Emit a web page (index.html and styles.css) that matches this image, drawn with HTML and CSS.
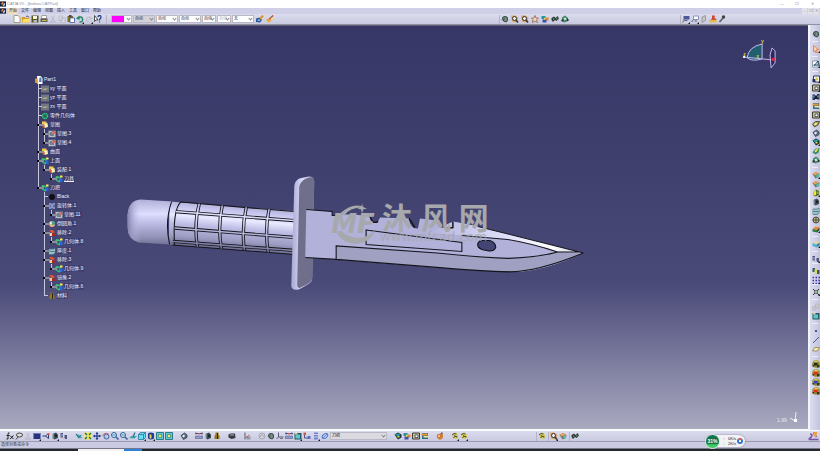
FILE: index.html
```html
<!DOCTYPE html>
<html lang="zh-CN">
<head>
<meta charset="utf-8">
<title>CATIA V5 - [bishou.CATPart]</title>
<link rel="stylesheet" href="styles.css">
</head>
<body>
<svg class="defs" aria-hidden="true">
  <symbol id="app" viewBox="0 0 16 16"><path fill="#16233f" d="M0 1h16v14H0z"/><path fill="#e98a38" d="M2 8l5-6 3 3-4 5z"/><path fill="#d8e6ff" d="M7 12l5-7 2 2-3 6z"/></symbol>
  <symbol id="new" viewBox="0 0 16 16"><path fill="#fff" stroke="#8a8860" stroke-width="1.5" d="M2 1h8l4 4v10H2z"/><path fill="#ddd6a0" d="M10 1v4h4z"/></symbol>
  <symbol id="open" viewBox="0 0 16 16"><path fill="#d59b22" d="M0 4h6l1 2h7v9H0z"/><path fill="#ffe06a" d="M3 8h13l-3 7H0z"/><path fill="none" stroke="#334" stroke-width="1.5" d="M8 3q4-3 6 2"/></symbol>
  <symbol id="save" viewBox="0 0 16 16"><path fill="#55551c" d="M1 1h14v14H1z"/><path fill="#f4f4df" d="M4 2h8v6H4z"/><path fill="#bbb" d="M5 10h7v5H5z"/></symbol>
  <symbol id="print" viewBox="0 0 16 16"><path fill="#fff" stroke="#555" d="M4 1h9v6H3z"/><path fill="#5d5d58" d="M1 7h14v7H1z"/><path fill="#d5c43c" d="M4 10h9v2H4z"/></symbol>
  <symbol id="cut" viewBox="0 0 16 16"><path fill="none" stroke="#b5b5c4" stroke-width="1.5" d="M4 1l6 10M11 1L6 11M3 12h3v3H3zM9 12h3v3H9z"/></symbol>
  <symbol id="copy" viewBox="0 0 16 16"><path fill="#dedee8" stroke="#b4b4c2" stroke-width="1.5" d="M2 2h7v9H2zM6 6h8v9H6z"/></symbol>
  <symbol id="paste" viewBox="0 0 16 16"><path fill="#81702d" d="M1 2h11v12H1z"/><path fill="#444" d="M4 0h5v4H4z"/><path fill="#fff" stroke="#32529c" stroke-width="1.5" d="M6 6h9v9H6z"/></symbol>
  <symbol id="undo" viewBox="0 0 16 16"><path fill="none" stroke="#238664" stroke-width="3" d="M4 6q8-5 9 2t-6 6"/><path fill="#238664" d="M0 7l7-6v9z"/></symbol>
  <symbol id="redo" viewBox="0 0 16 16"><path fill="none" stroke="#bdbdca" stroke-width="2" d="M12 6Q4 1 3 8t6 6"/><path fill="#bdbdca" d="M16 7L9 2v8z"/></symbol>
  <symbol id="help" viewBox="0 0 16 16"><path fill="#fff" stroke="#222" stroke-width="1.5" d="M1 1l7 9-4 0-3 3z"/><path fill="none" stroke="#24408c" stroke-width="2.5" d="M8 4q0-3 3-3t3 3-3 5v2M11 13v2"/></symbol>
  <symbol id="brush" viewBox="0 0 16 16"><path fill="#27559b" d="M0 7l8-2 4 5-4 5-8-1z"/><path fill="none" stroke="#d99722" stroke-width="4" d="M8 8l6-7"/><path fill="#76c1e8" d="M3 9h5v3H3z"/></symbol>
  <symbol id="wand" viewBox="0 0 16 16"><path fill="#e9a33c" d="M0 10l6-4 5 5-6 4z"/><path fill="none" stroke="#b0442e" stroke-width="2.5" d="M7 8l7-7"/><path fill="#f4de60" d="M10 5l6 2-5 4z"/></symbol>
  <symbol id="gear" viewBox="0 0 16 16"><circle cx="8" cy="8" r="6" fill="#7a8a84"/><path fill="none" stroke="#324843" stroke-width="2" d="M2 9q2-7 7-6t4 7-6 3 0-6"/></symbol>
  <symbol id="find" viewBox="0 0 16 16"><path fill="#d9a45d" d="M0 1h9l6 5-4 9-9-2z"/><circle cx="7" cy="7" r="4" fill="#eee" stroke="#333" stroke-width="2"/><path stroke="#333" stroke-width="3" d="M10 10l4 5"/></symbol>
  <symbol id="star" viewBox="0 0 16 16"><path fill="#f1dab5" stroke="#8b5b4d" stroke-width="1.5" d="M8 1l2 5 5 0-4 4 2 5-5-3-5 3 1-6-3-3h5z"/></symbol>
  <symbol id="multi" viewBox="0 0 16 16"><path fill="#2a92a8" d="M1 2h8v6H1z"/><path fill="#e08a30" d="M7 5h8v6H7z"/><path fill="#3e52a6" d="M3 9h8v6H3z"/><path fill="#efe55b" d="M6 6h3v3H6z"/></symbol>
  <symbol id="chain" viewBox="0 0 16 16"><path fill="#2d3f39" d="M1 6l5-3 3 3 4-4 3 5-5 5-3-2-4 4-3-4z"/><path fill="#a3c4b2" d="M4 7l3 1-2 2zM11 5l2 2-2 2z"/></symbol>
  <symbol id="eco" viewBox="0 0 16 16"><path fill="#3e8264" d="M2 5l6-4 6 5v6l-7 3-5-4z"/><path fill="#cfe6d6" d="M5 6l4-1 2 4-4 2z"/><path fill="#202e2a" d="M1 9h4v4H1zM12 8h3v4h-3z"/></symbol>
  <symbol id="flag" viewBox="0 0 16 16"><path fill="#4b56a0" d="M4 2h11v7H4z"/><path fill="none" stroke="#58606c" stroke-width="2" d="M4 2v9l-3 4M5 11h6"/></symbol>
  <symbol id="note" viewBox="0 0 16 16"><path fill="#fff" stroke="#6c79af" stroke-width="1.5" d="M5 2h10v7H5z"/><path fill="none" stroke="#58606c" stroke-width="2" d="M5 9l-4 5M7 12h5"/></symbol>
  <symbol id="plate" viewBox="0 0 16 16"><path fill="#c3c6bd" stroke="#8a8c88" stroke-width="1.5" d="M4 4l7-3v10l-7 4z"/></symbol>
  <symbol id="stamp" viewBox="0 0 16 16"><path fill="#d14732" d="M6 1h6l-1 6h3l1 3H3l3-3z"/><path fill="#e3bd4a" d="M0 10h15v5H1z"/></symbol>
  <symbol id="pin" viewBox="0 0 16 16"><path fill="none" stroke="#555d58" stroke-width="3" d="M3 14l7-8"/><circle cx="11" cy="4" r="3.5" fill="#3e4843"/></symbol>
  <symbol id="arrow" viewBox="0 0 16 16"><path fill="#fdd4b8" stroke="#e8864d" stroke-width="2" d="M3 1l10 8-5 1 3 5-3 1-2-5-3 3z"/></symbol>
  <symbol id="sketch" viewBox="0 0 16 16"><path fill="#fff" stroke="#6d8590" stroke-width="1.5" d="M1 2h11v12H1z"/><path fill="none" stroke="#214b56" stroke-width="2" d="M4 12l8-10 3 11M3 10h10"/></symbol>
  <symbol id="pad" viewBox="0 0 16 16"><path fill="#fff" stroke="#333a6c" stroke-width="2" d="M3 2h12v12H3z"/><path fill="#292d54" d="M1 8h6v6H1z"/><path fill="#dbc939" d="M7 5h5v6H7z"/></symbol>
  <symbol id="pocket" viewBox="0 0 16 16"><path fill="#c4c290" stroke="#403e32" stroke-width="2" d="M1 2h14v12H1z"/><path fill="#fff" stroke="#2e316a" stroke-width="1.500" d="M6 6h6v5H6z"/></symbol>
  <symbol id="shaft" viewBox="0 0 16 16"><path fill="#253b62" d="M1 3h5v11H1zM10 2h5v11h-5z"/><path fill="#15191d" d="M5 5h6v7H5z"/><path fill="#8cc8de" d="M3 5h2v4H3zM11 5h2v4h-2z"/></symbol>
  <symbol id="groove" viewBox="0 0 16 16"><path fill="#2c6e87" d="M2 2h12v12H2z"/><path fill="#ee9934" d="M1 3h12v4H1z"/><path fill="#f6e4a3" d="M5 8h10v3H5z"/></symbol>
  <symbol id="rib" viewBox="0 0 16 16"><path fill="#a5a252" stroke="#34372c" stroke-width="1.5" d="M1 8l6-5h8l-3 7-7 4z"/><path fill="#f6e98b" d="M6 6h5l-3 4H4z"/></symbol>
  <symbol id="slot" viewBox="0 0 16 16"><path fill="#5b7284" stroke="#253244" stroke-width="1.5" d="M2 7l7-5 5 4v5l-7 4z"/><path fill="#e9eee6" d="M4 8l4-3 2 3-3 3z"/></symbol>
  <symbol id="solid" viewBox="0 0 16 16"><path fill="#1c3038" d="M1 5l7-4 7 4v6l-7 4z"/><path fill="#25a1ad" d="M2 5l7-2 4 3-6 3z"/><path fill="#e8da2c" d="M7 8h4v3H7z"/></symbol>
  <symbol id="loft" viewBox="0 0 16 16"><path fill="#2e8e62" d="M1 11l5-7 9-2-2 9-6 4z"/><path fill="#f1dc48" d="M6 6l7-4-3 7-5 2z"/></symbol>
  <symbol id="fillet" viewBox="0 0 16 16"><path fill="#6d7773" d="M1 6l7-4 7 4-1 6-7 3z"/><path fill="#efa151" d="M1 5l7-3 5 3-7 4z"/><path fill="#4ec5b0" d="M9 8l5-2v5l-5 3z"/></symbol>
  <symbol id="draft" viewBox="0 0 16 16"><path fill="#56691f" d="M3 6l5-5 6 3v8l-7 3-4-2z"/><path fill="#f4e42f" d="M3 6l5-4v11l-5-1z"/><path fill="#88ae4b" d="M9 5h4v5H9z"/></symbol>
  <symbol id="shell" viewBox="0 0 16 16"><path fill="#3c4e58" d="M3 4l7-3 4 4v7l-7 3-4-3z"/><path fill="#a5b2b4" d="M2 4h3v9H2z"/><path fill="#1c242a" d="M8 5h4v5H8z"/></symbol>
  <symbol id="thick" viewBox="0 0 16 16"><path fill="#dcebe8" stroke="#3a7383" stroke-width="1.5" d="M2 4h9l3-2v10l-4 3H2z"/><path fill="none" stroke="#3a7383" stroke-width="1.5" d="M6 4v11M2 9h12M10 4v11"/></symbol>
  <symbol id="thread" viewBox="0 0 16 16"><circle cx="8" cy="8" r="6" fill="#cbbf7e" stroke="#4a4a43" stroke-width="2"/><path stroke="#4a4a43" stroke-width="2" d="M1 8h14M8 2v12"/></symbol>
  <symbol id="block" viewBox="0 0 16 16"><path fill="#ef842c" d="M1 8l6-5 8 2-5 5z"/><path fill="#317d40" d="M1 8l9 2v5l-9-2z"/><path fill="#214e4b" d="M10 10l5-5v5l-5 5z"/></symbol>
  <symbol id="cube" viewBox="0 0 16 16"><path fill="#e6d89b" d="M1 6l7-4 7 3-6 4z"/><path fill="#4cb9cf" d="M1 6l8 3v6l-8-3z"/><path fill="#338ca5" d="M9 9l6-4v6l-6 4z"/></symbol>
  <symbol id="mirror" viewBox="0 0 16 16"><path fill="#4f557e" d="M1 2h5v9H1zM9 6h5v8H9z"/><path fill="#b9bedf" d="M3 4h2v5H3zM6 12h4v2H6z"/></symbol>
  <symbol id="pair" viewBox="0 0 16 16"><path fill="#345c73" d="M1 2h5v8H1zM10 6h5v8h-5z"/><path fill="#e4d950" d="M5 5h5v8H5z"/></symbol>
  <symbol id="grid" viewBox="0 0 16 16"><path fill="none" stroke="#3131ad" stroke-width="3" stroke-dasharray="3 3" d="M1 3h15M1 9h15M1 15h15"/></symbol>
  <symbol id="scale" viewBox="0 0 16 16"><path stroke="#333" stroke-width="2" d="M2 2l12 12M14 2L2 14"/><path fill="#8ec28d" stroke="#333" d="M5 5h6v6H5z"/></symbol>
  <symbol id="ghost" viewBox="0 0 16 16"><path fill="#c9c9d1" stroke="#b5b5c0" stroke-width="1.5" d="M1 7h7v7H1zM7 2h7v8H7z"/></symbol>
  <symbol id="box" viewBox="0 0 16 16"><path fill="#25595f" d="M1 2h14v13H1z"/><path fill="#5ac6cf" d="M3 5h9v8H3z"/><path fill="#e2cd78" d="M2 2h5v3H2z"/></symbol>
  <symbol id="point" viewBox="0 0 16 16"><path fill="#3a5e9a" d="M6 6h4v4H6z"/></symbol>
  <symbol id="line" viewBox="0 0 16 16"><path stroke="#3d5a94" stroke-width="2" d="M2 14L14 2"/></symbol>
  <symbol id="plane" viewBox="0 0 16 16"><path fill="#f5e6a0" stroke="#827e5d" stroke-width="1.5" d="M1 12l4-7h10l-4 7z"/></symbol>
  <symbol id="ball" viewBox="0 0 16 16"><circle cx="8" cy="8" r="7.5" fill="#8d8934"/><path fill="#dfd351" d="M2 5l5-4 6 2-4 4z"/><path d="M4 5h7v6H4z"/><path fill="#283820" d="M10 10h5v5h-5zM1 10h3v3H1z"/></symbol>
  <symbol id="fx" viewBox="0 0 16 16"><path fill="none" stroke="#222" stroke-width="2" d="M7 2Q4 0 4 5v9H1M1 7h6M8 7l7 7M15 7l-7 7"/></symbol>
  <symbol id="chat" viewBox="0 0 16 16"><ellipse cx="9" cy="6" rx="6" ry="4" fill="#ddd" stroke="#444" stroke-width="2"/><path stroke="#444" stroke-width="2" d="M2 15l4-5"/></symbol>
  <symbol id="panel" viewBox="0 0 16 16"><path fill="#27337f" d="M1 2h14v12H1z"/><path fill="#6775b7" d="M1 2h14v2H1z"/></symbol>
  <symbol id="nodes" viewBox="0 0 16 16"><path fill="none" stroke="#333b67" stroke-width="2" d="M2 8h5l6-5v10L7 8"/><path fill="#5b8ccc" d="M1 6h4v4H1z"/><path fill="#d85a4c" d="M11 2h4v4h-4z"/></symbol>
  <symbol id="fly" viewBox="0 0 16 16"><path fill="#4ba9ba" d="M1 3l8 3 6 6-8 1z"/><path fill="none" stroke="#186a75" stroke-width="2" d="M2 4l5 7 6-5"/></symbol>
  <symbol id="fit" viewBox="0 0 16 16"><path fill="#efe65a" d="M1 1h14v14H1z"/><path fill="none" stroke="#226958" stroke-width="2.5" d="M2 2l4 4M14 2l-4 4M2 14l4-4M14 14l-4-4"/></symbol>
  <symbol id="pan" viewBox="0 0 16 16"><path fill="none" stroke="#26408d" stroke-width="2.5" d="M8 1v14M1 8h14"/><path fill="#26408d" d="M8 0l3 4H5zM8 16l3-4H5zM0 8l4-3v6zM16 8l-4-3v6z"/></symbol>
  <symbol id="rotate" viewBox="0 0 16 16"><circle cx="9" cy="9" r="5" fill="#b2cce5" stroke="#465c9b" stroke-width="2"/><path fill="none" stroke="#cc604c" stroke-width="2" d="M1 8q3-8 12-4"/></symbol>
  <symbol id="zoom" viewBox="0 0 16 16"><circle cx="6" cy="6" r="5" fill="#c9f0f2" stroke="#315e9a" stroke-width="2"/><path stroke="#315e9a" stroke-width="3" d="M10 10l5 5"/><path stroke="#315e9a" stroke-width="1.5" d="M3 6h6"/></symbol>
  <symbol id="normal" viewBox="0 0 16 16"><path fill="#3ba7b5" d="M0 12l5-4h11l-5 5z"/><path fill="none" stroke="#357080" stroke-width="2.5" d="M8 10l4-9"/></symbol>
  <symbol id="iso" viewBox="0 0 16 16"><path fill="#65dded" stroke="#246e9b" stroke-width="1.5" d="M1 5l4-4h10v10l-4 4H1z"/><path fill="none" stroke="#246e9b" stroke-width="1.5" d="M1 5h10v10M11 5l4-4"/></symbol>
  <symbol id="cyl" viewBox="0 0 16 16"><path fill="#203d91" d="M2 3q6-4 12 0v10q-6 4-12 0z"/><path fill="#e8cf4a" d="M5 5h4v8H5z"/></symbol>
  <symbol id="view" viewBox="0 0 16 16"><path fill="#61cad0" stroke="#287c8d" stroke-width="2" d="M1 1h14v14H1z"/><path fill="#e3e86e" stroke="#35635b" d="M5 5h6v6H5z"/></symbol>
  <symbol id="measure" viewBox="0 0 16 16"><path fill="none" stroke="#4a4c75" stroke-width="2" d="M1 3h14M2 1v4M14 1v4"/><path fill="#8d9cd1" stroke="#4a4c75" d="M1 8h14v5H1z"/><path fill="#d55" d="M6 2h4v3H6z"/></symbol>
  <symbol id="weight" viewBox="0 0 16 16"><path fill="#967520" d="M5 1h6v4l2 3v6H3V8l2-3z"/><path fill="#302811" d="M8 2h2v12H8z"/></symbol>
  <symbol id="camera" viewBox="0 0 16 16"><path fill="#343943" d="M1 5l4-2h9l1 9-8 2-6-3z"/><path fill="#aeb4c0" d="M4 5h8v2H4z"/></symbol>
  <symbol id="axis" viewBox="0 0 16 16"><path fill="none" stroke="#545b7a" stroke-width="2" d="M5 1v9h10M5 10l-4 4"/><path fill="#777" d="M8 12h6v2H8z"/></symbol>
  <symbol id="bars" viewBox="0 0 16 16"><path fill="#929ca8" d="M2 1h4v14H2zM7 9h8v6H7z"/><path stroke="#b6574a" stroke-width="2" d="M5 12l8-6"/></symbol>
  <symbol id="ring" viewBox="0 0 16 16"><ellipse cx="8" cy="8" rx="6" ry="4" fill="#c5d8ff" stroke="#4b74cb" stroke-width="2" transform="rotate(-35 8 8)"/><path fill="none" stroke="#4b74cb" stroke-width="1.5" d="M2 13L14 3"/></symbol>
  <symbol id="faint" viewBox="0 0 16 16"><circle cx="8" cy="8" r="6" fill="#d4d4dc" stroke="#a4a5b5" stroke-width="2"/><path fill="none" stroke="#a4a5b5" stroke-width="2" d="M4 10l4-5 4 5"/></symbol>
  <symbol id="stack" viewBox="0 0 16 16"><path fill="#6d83cf" d="M4 1h8v3H4zM4 6h8v3H4zM4 11h8v4H4z"/></symbol>
  <symbol id="tree" viewBox="0 0 16 16"><path fill="none" stroke="#4f5284" stroke-width="2" d="M3 3v9h9"/><path fill="#d05b4b" d="M1 1h5v5H1z"/><path fill="#5c6fc1" d="M9 8h6v6H9z"/></symbol>
  <symbol id="apple" viewBox="0 0 16 16"><path fill="#cf7a2d" d="M2 5q6-3 12 0 1 7-4 10H6Q0 11 2 5z"/><path fill="#68442a" d="M8 5l4-5 2 3z"/><path fill="#f2bd7d" d="M4 6h4v4H4z"/></symbol>
  <symbol id="spiral" viewBox="0 0 16 16"><path fill="#d9cf59" d="M2 3l8-2 5 6-3 7-8-1z"/><path fill="none" stroke="#444a45" stroke-width="2" d="M2 6q4-5 9-2M5 12q2-6 8-2M6 7l5 3"/></symbol>
  <symbol id="body" viewBox="0 0 16 16"><path fill="#3ac477" d="M3 2l5 1 4 3-2 3 3 4-5 2-6-4-2-5z"/><path fill="#1b5f54" d="M5 6h4v5H5z"/><path fill="#2c65dd" d="M10 7h5v7h-5z"/><path fill="#f5ef55" d="M10 1h5v4h-5z"/></symbol>
  <symbol id="geo" viewBox="0 0 16 16"><circle cx="8" cy="8" r="5" fill="#1d6855" stroke="#39be75" stroke-width="3" stroke-dasharray="3 1"/></symbol>
  <symbol id="set" viewBox="0 0 16 16"><path fill="#f5c94b" d="M2 1h9v6H2z"/><path fill="#fff1b0" d="M6 6l7-2 1 8-7 2z"/><path fill="#e4572a" d="M3 8h4v5H3z"/></symbol>
  <symbol id="sk" viewBox="0 0 16 16"><path fill="#777d91" d="M0 1h16v14H0z"/><path fill="none" stroke="#d2d7e4" stroke-width="1.5" d="M3 3v10h10V8L7 3z"/><path fill="#e36c45" d="M9 3h5v5H9z"/></symbol>
  <symbol id="pl" viewBox="0 0 16 16"><path fill="#72767f" d="M0 1h16v14H0z"/><path fill="#b5ae88" d="M2 10l4-3h8l-4 3z"/></symbol>
  <symbol id="part" viewBox="0 0 16 16"><path fill="#fff" d="M4 0h7l4 4v12H5z"/><path fill="#d79c34" d="M0 5h5v9H0z"/><path fill="#4a7fb8" d="M9 3h4v9H8z"/></symbol>
  <symbol id="black" viewBox="0 0 16 16"><circle cx="8" cy="8" r="6" fill="#101014"/></symbol>
  <symbol id="rev" viewBox="0 0 16 16"><path fill="none" stroke="#8fa9ef" stroke-width="3" stroke-dasharray="5 2" d="M4 2v12M12 2v12"/><path fill="#e7e7f8" d="M7 3h2v10H7z"/></symbol>
  <symbol id="edge" viewBox="0 0 16 16"><circle cx="8" cy="8" r="6" fill="#efb27d"/><path fill="#3da48c" d="M8 2q7 1 6 7l-6 1z"/><path fill="#fff" d="M3 5h4v3H3z"/></symbol>
  <symbol id="rem" viewBox="0 0 16 16"><path fill="#e4532f" d="M2 2h7l5 4-6 3z"/><path fill="#f2d1a8" d="M3 8h5v6H3z"/><path fill="#a5281f" d="M8 9h6v5H8z"/></symbol>
</svg>

<header class="titlebar"><svg class="logo"><use href="#app"/></svg><h1>CATIA V5 - [bishou.CATPart]</h1><span class="win"><button aria-label="最小化">—</button><button aria-label="还原">❐</button><button aria-label="关闭">✕</button></span></header>
<nav class="menubar"><svg class="logo"><use href="#app"/></svg><a class="current" href="#">开始</a><a href="#">文件</a><a href="#">编辑</a><a href="#">视图</a><a href="#">插入</a><a href="#">工具</a><a href="#">窗口</a><a href="#">帮助</a><span class="win doc"><button aria-label="最小化文档">–</button><button aria-label="还原文档">❐</button><button aria-label="关闭文档">✕</button></span></nav>

<div class="toolbar top" role="toolbar" aria-label="标准">
  <div class="group">
    <button aria-label="新建"><svg><use href="#new"/></svg></button><button aria-label="打开"><svg><use href="#open"/></svg></button><button aria-label="保存"><svg><use href="#save"/></svg></button><button aria-label="打印"><svg><use href="#print"/></svg></button><button aria-label="剪切"><svg><use href="#cut"/></svg></button><button aria-label="复制"><svg><use href="#copy"/></svg></button><button aria-label="粘贴"><svg><use href="#paste"/></svg></button><button class="more" aria-label="撤销"><svg><use href="#undo"/></svg></button><button class="more" aria-label="重做"><svg><use href="#redo"/></svg></button><button aria-label="帮助"><svg><use href="#help"/></svg></button>
  </div>
  <div class="group combos">
    <label class="combo color"><select aria-label="颜色"><option></option></select></label>
    <label class="combo wide off"><select aria-label="透明度"><option>自动</option></select></label>
    <label class="combo wide"><select aria-label="线宽"><option>自动</option></select></label>
    <label class="combo wide"><select aria-label="线型"><option>自动</option></select></label>
    <label class="combo"><select aria-label="点型"><option>自动</option></select></label>
    <label class="combo dim"><select aria-label="渲染"><option>自动</option></select></label>
    <label class="combo wide"><select aria-label="图层"><option>无</option></select></label>
    <button aria-label="格式刷"><svg><use href="#brush"/></svg></button><button aria-label="向导"><svg><use href="#wand"/></svg></button>
  </div>
  <div class="group tools">
    <button aria-label="设置"><svg><use href="#gear"/></svg></button><button aria-label="查找"><svg><use href="#find"/></svg></button><button aria-label="搜索"><svg><use href="#find"/></svg></button><button aria-label="收藏"><svg><use href="#star"/></svg></button><button aria-label="目录"><svg><use href="#multi"/></svg></button><button aria-label="链接"><svg><use href="#chain"/></svg></button><button aria-label="更新"><svg><use href="#eco"/></svg></button>
  </div>
  <div class="group notes">
    <button class="more" aria-label="标记"><svg><use href="#flag"/></svg></button><button class="more" aria-label="注释"><svg><use href="#note"/></svg></button><button aria-label="视图面"><svg><use href="#plate"/></svg></button><button aria-label="印章"><svg><use href="#stamp"/></svg></button><button aria-label="固定"><svg><use href="#pin"/></svg></button>
  </div>
</div>

<main class="work">
  <section class="viewport">
    <svg class="scene" viewBox="0 26 808 404" role="img" aria-label="刀具三维模型">
      <defs>
        <linearGradient id="round" gradientUnits="userSpaceOnUse" x1="220" y1="203" x2="216" y2="250"><stop offset="0" stop-color="#a6a6c9"/><stop offset=".15" stop-color="#c4c4ee"/><stop offset=".34" stop-color="#e9e9ff"/><stop offset=".52" stop-color="#bdbde5"/><stop offset=".78" stop-color="#9d9dc4"/><stop offset="1" stop-color="#65658a"/></linearGradient>
        <linearGradient id="pommel" x1="0" y1="0" x2="0" y2="1"><stop offset="0" stop-color="#b0b0d8"/><stop offset=".32" stop-color="#dedeff"/><stop offset=".55" stop-color="#b9b9e2"/><stop offset=".85" stop-color="#9090b5"/><stop offset="1" stop-color="#727297"/></linearGradient>
        <linearGradient id="cap"><stop offset="0" stop-color="#8484ae"/><stop offset="1" stop-color="#c3c3ed" stop-opacity="0"/></linearGradient>
        <linearGradient id="rim"><stop offset="0" stop-color="#a9a9d0"/><stop offset=".5" stop-color="#dcdcfb"/><stop offset="1" stop-color="#9696bb"/></linearGradient>
        <linearGradient id="bevel"><stop offset="0" stop-color="#b4b4dc"/><stop offset=".5" stop-color="#dfdffb"/><stop offset=".8" stop-color="#fff"/><stop offset="1" stop-color="#bdbddd"/></linearGradient>
        <clipPath id="gripclip"><path d="M176 202.500L294 211.500V255L172 245.500Q174 222 176 202.500z"/></clipPath>
      </defs>
      <path fill="url(#round)" d="M169 202L294 211.500V255L168 245z"/>
      <path fill="url(#pommel)" d="M140 200L171 202Q164 222 169 245L138 243Q127 240 127 228V215Q128 201 140 200z"/>
      <path fill="url(#cap)" d="M140 200V243H138Q127 240 127 228V215Q128 201 140 200z"/>
      <path fill="none" stroke="#15151c" stroke-width="1.100" d="M171 202Q164 222 169 245M180 202.500Q172 211 174 246M180 202.500L294 212M172 245.500L294 255"/>
      <g fill="none" clip-path="url(#gripclip)">
        <g stroke="#14141a" stroke-width="3.300"><path d="M174 212L294 221M174 228.500L294 238M172 242L294 251"/><path d="M199 203Q193 225 197 248M222 205Q217 227 221 250M246 207Q241 229 244 251M269 208Q264 231 268 254"/></g>
        <g stroke="url(#round)" stroke-width="1.600"><path d="M174 212L294 221M174 228.500L294 238M172 242L294 251"/><path d="M199 203Q193 225 197 248M222 205Q217 227 221 250M246 207Q241 229 244 251M269 208Q264 231 268 254"/></g>
      </g>
      <path fill="url(#rim)" d="M294 187Q294 182 299 179L307 177Q314 176 314 182L312 279Q312 283 308 285L299 290Q291 292 291 286z"/>
      <path fill="#6f6f8b" d="M299 187Q300 182 306 179L310 178Q314 177 314 182L312 279Q311 283 307 285L301 288Q297 290 297 285z"/>
      <path fill="#b1b1da" d="M306 210L332 212V216L341 215L354 215L370 217Q372 225 378 222L380 218L409 219Q410 230 418 229L420 219L437 221Q439 229 447 230L453 229V222L478 227L584 253.500Q548 270 522 272Q480 272 437 268L336 260L305 258z"/>
      <path fill="#a0a0c2" d="M336 246.500L437 253.500Q480 258 510 259Q538 258 558 252L584 253.500Q548 270 522 272Q480 272 437 268L336 260z"/>
      <path fill="url(#bevel)" d="M453 222L478 227L584 253.500L558 252Q532 244 508 240L430 233z"/>
      <path fill="none" stroke="#15151c" stroke-width="1.100" d="M306 210L332 212V216H341M305 258L336 260L437 268Q480 272 510 272.500Q539 272 584 253.500M336 260V246.500L437 253.500Q480 258 508 259Q538 258 558 252.500H580M366 230.500L462 243V252L366 245zM478 227L584 253.500M462 236L508 240Q532 244 558 252.500"/>
      <path fill="none" stroke="#15151c" stroke-width="1.500" d="M370 217Q372 225 378 222M409 219L415 228M437 221Q440 230 446 226M446 229L453 228L453 222"/>
      <path fill="#444475" stroke="#111118" stroke-width="1.100" d="M483 241H490Q496 243 496 248Q494 252 489 251.500L482 250Q477 248 478 244Q479 241 483 241z"/>
      <g class="watermark"><text class="mark" x="331" y="234">MF</text><path d="M340 214Q353 202 365 208Q350 207 344 216zM336 232Q343 246 359 244Q371 242 375 231Q365 240 354 238Q345 236 341 231zM362 204L363 208L367 209L363 210L362 214L361 210L357 209L361 208z"/><text class="name" x="382 421 459" y="230">沐风网</text><text class="site" x="380" y="242">www.mfcad.com</text></g>
      <g fill="none" stroke="#c3b8ee"><path fill="#225d70" d="M763 44Q749 47 748 58Q753 62 763 59z"/><path d="M744 57L773 60"/><path fill="#30265a" d="M773 48L776 51V63L772 68L771 55z"/></g>
      <circle cx="774" cy="59.500" r="1.700" fill="#f22234"/><path fill="#fff" d="M744 56h2v2h-2z"/>
      <g class="axis"><text x="744" y="56">z</text><text x="762" y="43">y</text><text x="757" y="58">x</text></g>
      <path fill="none" stroke="#ececf5" d="M791 419L796 422L797 413"/><path fill="#fff" d="M795 420h3v3h-3z"/><text class="scale" x="778" y="423">1.99</text>
    </svg>
    <div class="spec">
      <span class="node root"><svg><use href="#part"/></svg><b>Part1</b></span>
      <ul>
        <li><span class="node"><svg><use href="#pl"/></svg><b>xy 平面</b></span></li>
        <li><span class="node"><svg><use href="#pl"/></svg><b>yz 平面</b></span></li>
        <li><span class="node"><svg><use href="#pl"/></svg><b>zx 平面</b></span></li>
        <li><span class="node"><svg><use href="#geo"/></svg><b>零件几何体</b></span></li>
        <li class="knot"><span class="node"><svg><use href="#set"/></svg><b>草图</b></span>
          <ul><li class="knot"><span class="node"><svg><use href="#sk"/></svg><b>草图.3</b></span></li><li class="knot"><span class="node"><svg><use href="#sk"/></svg><b>草图.4</b></span></li></ul></li>
        <li class="knot"><span class="node"><svg><use href="#set"/></svg><b>曲面</b></span></li>
        <li class="knot"><span class="node"><svg><use href="#body"/></svg><b>上面</b></span>
          <ul><li class="knot"><span class="node"><svg><use href="#set"/></svg><b>装配.1</b></span>
            <ul><li class="knot"><span class="node"><svg><use href="#body"/></svg><b class="linked">刀具</b></span></li></ul></li></ul></li>
        <li class="knot"><span class="node"><svg><use href="#body"/></svg><b>刀把</b></span>
          <ul>
            <li><span class="node"><svg><use href="#black"/></svg><b>Black</b></span></li>
            <li class="knot"><span class="node"><svg><use href="#rev"/></svg><b>旋转体.1</b></span><ul><li class="knot"><span class="node"><svg><use href="#sk"/></svg><b>草图.11</b></span></li></ul></li>
            <li class="knot"><span class="node"><svg><use href="#edge"/></svg><b>倒圆角.1</b></span></li>
            <li class="knot"><span class="node"><svg><use href="#rem"/></svg><b>移除.2</b></span><ul><li class="knot"><span class="node"><svg><use href="#body"/></svg><b>几何体.8</b></span></li></ul></li>
            <li class="knot"><span class="node"><svg><use href="#thick"/></svg><b>厚度.1</b></span></li>
            <li class="knot"><span class="node"><svg><use href="#rem"/></svg><b>移除.3</b></span><ul><li class="knot"><span class="node"><svg><use href="#body"/></svg><b>几何体.9</b></span></li></ul></li>
            <li class="knot"><span class="node"><svg><use href="#rem"/></svg><b>镜像.2</b></span><ul><li class="knot"><span class="node"><svg><use href="#body"/></svg><b>几何体.6</b></span></li></ul></li>
            <li><span class="node"><svg><use href="#weight"/></svg><b>材料</b></span></li>
          </ul></li>
      </ul>
    </div>
  </section>
  <aside class="side" role="toolbar" aria-label="零件设计">
    <div class="group"><button aria-label="工作台"><svg><use href="#gear"/></svg></button></div>
    <div class="group"><button class="more" aria-label="选择"><svg><use href="#arrow"/></svg></button></div>
    <div class="group"><button class="more" aria-label="草图"><svg><use href="#sketch"/></svg></button></div>
    <div class="group"><button class="more" aria-label="凸台"><svg><use href="#pad"/></svg></button><button class="more" aria-label="凹槽"><svg><use href="#pocket"/></svg></button><button aria-label="旋转体"><svg><use href="#shaft"/></svg></button><button aria-label="旋转槽"><svg><use href="#groove"/></svg></button><button aria-label="孔"><svg><use href="#pocket"/></svg></button><button aria-label="肋"><svg><use href="#rib"/></svg></button><button aria-label="开槽"><svg><use href="#slot"/></svg></button><button class="more" aria-label="实体混合"><svg><use href="#solid"/></svg></button><button aria-label="多截面实体"><svg><use href="#loft"/></svg></button><button aria-label="移除多截面"><svg><use href="#eco"/></svg></button></div>
    <div class="group"><button class="more" aria-label="圆角"><svg><use href="#fillet"/></svg></button><button aria-label="倒角"><svg><use href="#fillet"/></svg></button><button class="more" aria-label="拔模"><svg><use href="#draft"/></svg></button><button aria-label="抽壳"><svg><use href="#shell"/></svg></button><button aria-label="厚度"><svg><use href="#thick"/></svg></button><button aria-label="螺纹"><svg><use href="#thread"/></svg></button><button class="more" aria-label="移除面"><svg><use href="#block"/></svg></button></div>
    <div class="group"><button class="more" aria-label="分割"><svg><use href="#cube"/></svg></button></div>
    <div class="group"><button class="more" aria-label="平移"><svg><use href="#mirror"/></svg></button></div>
    <div class="group near"><button aria-label="镜像"><svg><use href="#pair"/></svg></button><button class="more" aria-label="阵列"><svg><use href="#grid"/></svg></button></div>
    <div class="group near"><button class="more" aria-label="缩放"><svg><use href="#scale"/></svg></button></div>
    <div class="group"><button aria-label="约束"><svg><use href="#ghost"/></svg></button><button aria-label="对话框约束"><svg><use href="#box"/></svg></button></div>
    <div class="group"><button aria-label="点"><svg><use href="#point"/></svg></button><button aria-label="直线"><svg><use href="#line"/></svg></button><button aria-label="平面"><svg><use href="#plane"/></svg></button></div>
    <div class="group balls"><button aria-label="装配"><svg><use href="#ball"/></svg></button><button class="red" aria-label="添加"><svg><use href="#ball"/></svg></button><button class="blue" aria-label="移除"><svg><use href="#ball"/></svg></button><button class="red" aria-label="相交"><svg><use href="#ball"/></svg></button></div>
  </aside>
</main>

<div class="toolbar bottom" role="toolbar" aria-label="视图">
  <div class="group"><button aria-label="公式"><svg><use href="#fx"/></svg></button><button aria-label="注解"><svg><use href="#chat"/></svg></button><button aria-label="锁定"><svg><use href="#cut"/></svg></button><button class="more" aria-label="设计表"><svg><use href="#panel"/></svg></button><button aria-label="关系"><svg><use href="#nodes"/></svg></button><button class="more" aria-label="规则"><svg><use href="#shell"/></svg></button><button aria-label="参数"><svg><use href="#mirror"/></svg></button></div>
  <div class="group"><button aria-label="飞行"><svg><use href="#fly"/></svg></button><button aria-label="全部适应"><svg><use href="#fit"/></svg></button><button aria-label="平移视图"><svg><use href="#pan"/></svg></button><button aria-label="旋转"><svg><use href="#rotate"/></svg></button><button aria-label="放大"><svg><use href="#zoom"/></svg></button><button aria-label="缩小"><svg><use href="#zoom"/></svg></button><button aria-label="法线视图"><svg><use href="#normal"/></svg></button><button class="more" aria-label="等轴测"><svg><use href="#iso"/></svg></button><button class="more" aria-label="着色"><svg><use href="#cyl"/></svg></button><button aria-label="隐藏"><svg><use href="#view"/></svg></button><button aria-label="交换空间"><svg><use href="#view"/></svg></button></div>
  <div class="group"><button aria-label="捕捉"><svg><use href="#slot"/></svg></button></div>
  <div class="group"><button aria-label="测量间距"><svg><use href="#measure"/></svg></button><button aria-label="测量项"><svg><use href="#shell"/></svg></button><button aria-label="测量惯量"><svg><use href="#weight"/></svg></button></div>
  <div class="group"><button aria-label="截图"><svg><use href="#camera"/></svg></button></div>
  <div class="group"><button aria-label="分析"><svg><use href="#bars"/></svg></button></div>
  <div class="group"><button aria-label="更新全部"><svg><use href="#faint"/></svg></button><button aria-label="手动更新"><svg><use href="#gear"/></svg></button><button aria-label="轴系"><svg><use href="#axis"/></svg></button><button aria-label="平均尺寸"><svg><use href="#measure"/></svg></button><button class="more" aria-label="几何体"><svg><use href="#box"/></svg></button><button aria-label="结构树"><svg><use href="#tree"/></svg></button><button class="more" aria-label="层叠"><svg><use href="#stack"/></svg></button><button aria-label="选择集"><svg><use href="#ring"/></svg></button></div>
  <label class="combo body"><select aria-label="当前几何体"><option>刀把</option></select></label>
  <div class="group"><button aria-label="拔模分析"><svg><use href="#solid"/></svg></button><button aria-label="曲率分析"><svg><use href="#multi"/></svg></button><button aria-label="螺纹分析"><svg><use href="#pocket"/></svg></button><button aria-label="壁厚分析"><svg><use href="#groove"/></svg></button></div>
  <div class="group"><button aria-label="应用材料"><svg><use href="#apple"/></svg></button></div>
  <div class="group"><button class="more" aria-label="超级副本"><svg><use href="#spiral"/></svg></button><button class="more" aria-label="用户特征"><svg><use href="#spiral"/></svg></button></div>
  <div class="group extra"><button aria-label="目录浏览"><svg><use href="#spiral"/></svg></button></div>
  <div class="group slim"><button class="more" aria-label="保存模板"><svg><use href="#find"/></svg></button><button aria-label="文档模板"><svg><use href="#fillet"/></svg></button></div>
  <div class="group slim"><button aria-label="刷新"><svg><use href="#chain"/></svg></button></div>
  <svg class="brand" viewBox="0 0 24 20" aria-hidden="true"><path fill="none" stroke="#7a55a8" stroke-width="3" d="M5 6q6 0 3 5t-6 5M12 3l6 9M3 17h19"/><path fill="#ef9f43" d="M13 2h7l-3 10-5-2z"/></svg>
</div>
<footer class="status"><span>选择对象或命令</span></footer>
<div class="taskbar"><i></i><i></i></div>
<div class="monitor"><strong>31%</strong><span class="arrows"><i>↑</i><i>↓</i></span><span class="speed"><i>0K/s</i><i>2K/s</i></span><em></em></div>
</body>
</html>
```
FILE: styles.css
```css
* { box-sizing: border-box; }
body {
  margin: 0;
  height: 100vh;
  display: flex;
  flex-direction: column;
  overflow: hidden;
  position: relative;
  background: #cecee6;
  color: #222230;
  font: 4px/6px "Liberation Sans", "Noto Sans CJK SC", sans-serif;
}
button {
  padding: 0;
  border: 0;
  background: none;
  font: inherit;
  color: inherit;
}
.defs { position: absolute; width: 0; height: 0; }
.logo { width: 6px; height: 6px; flex: none; }

.titlebar, .menubar { display: flex; align-items: center; flex: none; }
.titlebar { height: 8px; background: #fff; }
.titlebar h1 { margin: 0 0 0 1px; font-size: 4px; font-weight: 400; color: #8c8c96; }
.win { margin-left: auto; display: flex; gap: 7px; padding-right: 4px; color: #888; }
.win button { width: 8px; }
.menubar { height: 6px; background: #cfcfe8; }
.menubar a { color: #26262e; text-decoration: none; padding: 0 1px; margin-left: 2px; }
.menubar .current { background: #f7dcb8; }
.win.doc { gap: 1px; padding-right: 1px; }
.win.doc button { width: 5px; background: #e2e2ea; }

.toolbar { display: flex; align-items: center; flex: none; background: linear-gradient(#dcdcee, #c9c9e0); }
.toolbar.top { height: 11px; padding-left: 12px; border-bottom: 1px solid #8f8fa2; }
.toolbar .group { display: flex; align-items: center; flex: none; }
.group button { position: relative; width: 9px; height: 9px; display: grid; place-items: center; }
.group svg { width: 8px; height: 8px; display: block; }
.more::after {
  content: "";
  position: absolute;
  right: 0;
  bottom: 0;
  border: 1px solid #15151c;
  border-top-color: transparent;
  border-left-color: transparent;
}
.toolbar .combos { gap: 1px; margin-left: 4px; padding-left: 4px; border-left: 1px solid #b3b3c8; }
.combo {
  position: relative;
  display: block;
  width: 14px;
  height: 8px;
  background: #fff;
  border: 1px solid #b9b9c6;
}
.combo.wide { width: 22px; }
.combo.color { width: 21px; }
.combo.off { background: #d2d2d8; }
.combo.dim { color: #aaa; }
.combo select {
  display: block;
  appearance: none;
  width: 100%;
  height: 6px;
  margin: 0;
  padding: 0 0 0 1px;
  border: 0;
  border-radius: 0;
  background: none;
  color: inherit;
  font: inherit;
}
.combo.color select { width: 12px; background: #f0f; }
.combo::after {
  content: "";
  position: absolute;
  right: 1px;
  top: 1px;
  width: 2px;
  height: 2px;
  border: solid #888;
  border-width: 0 1px 1px 0;
  transform: rotate(45deg);
}
.toolbar .tools { margin-left: 225px; gap: 1px; border-left: 1px solid #b3b3c8; }
.toolbar .notes { margin-left: 111px; border-left: 1px solid #b3b3c8; }

.work { flex: 1; min-height: 0; display: flex; }
.viewport {
  flex: 1;
  min-width: 0;
  position: relative;
  border-top: 1px solid #5f5f70;
  border-bottom: 1px solid #fff;
  background: linear-gradient(#373767, #40406f 35%, #4a4a79 64%, #66668e 75%, #a9a9c0);
}
.scene { position: absolute; inset: 0; width: 100%; height: 100%; }
.watermark { fill: #a6a8ab; }
.watermark .mark { font: italic bold 26px "DejaVu Sans", sans-serif; }
.watermark .name { font: bold 30px "Noto Sans CJK SC", sans-serif; }
.watermark .site { font: 13px "DejaVu Sans", sans-serif; opacity: .8; }
.axis { fill: #d4c944; font-size: 5px; font-weight: 700; }
.scale { fill: #ececf5; font-size: 5px; }

.spec { position: relative; padding: 49px 0 0 35px; color: #f0f0fa; font-size: 5px; line-height: 9px; width: max-content; }
.spec ul { list-style: none; margin: 0; padding: 0 0 0 3px; }
.spec ul ul { margin-left: -3px; padding-left: 6px; }
.spec li { position: relative; padding-left: 3px; }
.spec ul ul li { padding-left: 4px; }
.spec li::before { content: ""; position: absolute; left: 0; top: 0; bottom: 0; border-left: 1px solid #c6c6d8; }
.spec li:last-child::before { bottom: auto; height: 5px; }
.spec li::after { content: ""; position: absolute; left: 0; top: 4px; width: 4px; height: 1px; background: #c6c6d8; }
.spec .knot::after { border-left: 2px solid #08080c; height: 2px; background: #8d8da0; left: -1px; width: 5px; }
.node { display: flex; align-items: center; height: 9px; gap: 1px; }
.node svg { width: 8px; height: 8px; flex: none; }
.node b { font-weight: 400; line-height: 7px; padding-right: 1px; background: #34346580; }
.node .linked { text-decoration: underline; }

.side {
  flex: none;
  width: 12px;
  padding: 4px 0 0 1px;
  border-left: 2px solid #f4f4fc;
  background: linear-gradient(90deg, #dcdcf0, #c3c3de);
  display: flex;
  flex-direction: column;
  gap: 6px;
}
.side .group { position: relative; }
.side .group + .group::before { content: ""; position: absolute; left: 1px; top: -3px; width: 6px; border-top: 1px solid #eeeef8; }
.side .near { margin-top: -3px; }
.balls { fill: #222b20; }
.balls .red { fill: #e02c20; }
.balls .blue { fill: #3444b8; }

.toolbar.bottom { height: 12px; padding-left: 5px; gap: 6px; border-top: 1px solid #f8f8ff; border-bottom: 1px solid #9a9ab0; }
.combo.body { width: 57px; margin-left: -5px; background: #dadae0; flex: none; }
.toolbar .extra { margin-left: 62px; margin-right: -4px; }
.toolbar .extra, .toolbar .slim { border-left: 1px solid #b3b3c8; }
.toolbar .slim { margin-right: -4px; }
.brand { width: 13px; height: 10px; margin-left: auto; }
.status { flex: none; height: 6px; padding-left: 1px; background: #cacae2; color: #33333d; }
.status span { display: block; }
.taskbar { flex: none; height: 3px; display: flex; padding-left: 78px; background: #25272b; border-top: 1px solid #77778a; }
.taskbar i { width: 46px; background: #f3f3f3; }
.taskbar i + i { width: 18px; background: #2b83dc; }

.monitor {
  position: absolute;
  right: 75px;
  bottom: 4px;
  width: 39px;
  height: 12px;
  padding-right: 2px;
  display: flex;
  align-items: center;
  gap: 3px;
  border-radius: 6px;
  background: #f2f2f4;
  box-shadow: 0 0 2px #777790;
  font-size: 4px;
  line-height: 5px;
}
.monitor strong {
  flex: none;
  width: 15px;
  height: 15px;
  margin-left: -1px;
  border-radius: 50%;
  background: linear-gradient(#10744c 65%, #44c865 75%);
  border: 1px solid #d8ebe0;
  color: #fff;
  font-size: 5px;
  line-height: 13px;
  text-align: center;
}
.monitor i { display: block; font-style: normal; }
.arrows { color: #d44; }
.arrows i + i { color: #2a9a55; }
.monitor em { width: 6px; height: 6px; border-radius: 50%; border: 2px solid #3474d4; background: #fff; flex: none; margin-left: -2px; border-top-color: #dc5046; }
```
